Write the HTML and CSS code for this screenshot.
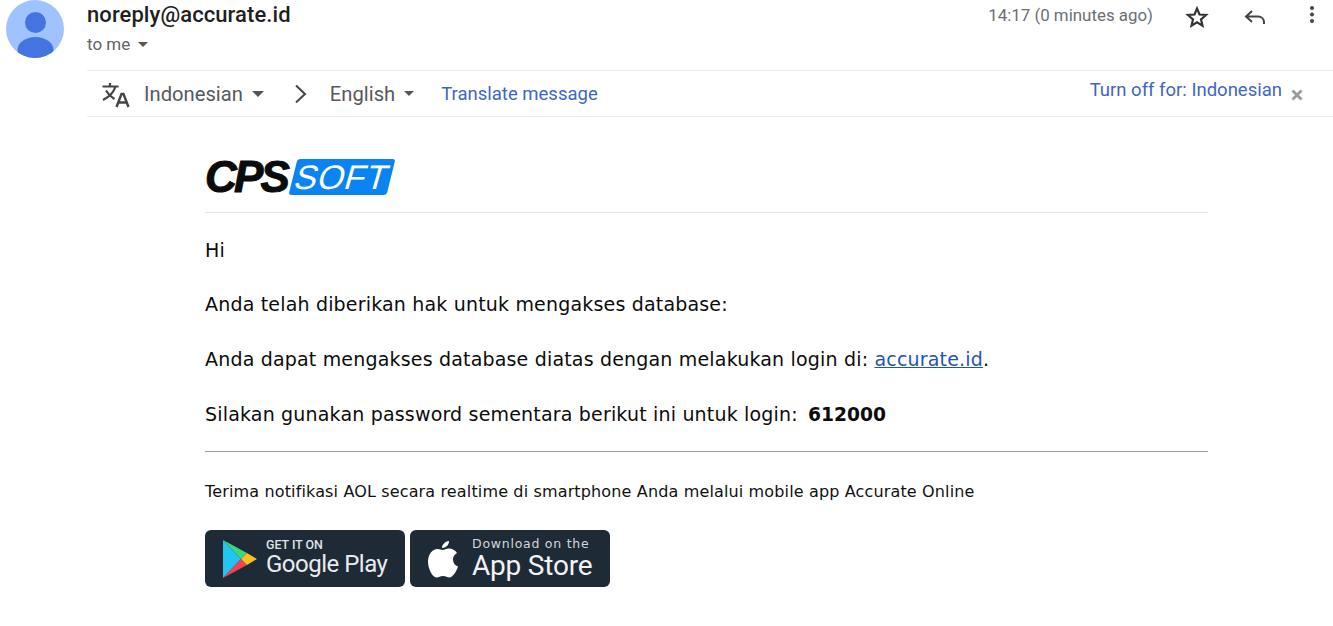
FILE: index.html
```html
<!DOCTYPE html>
<html lang="en">
<head>
<meta charset="utf-8">
<title>noreply@accurate.id</title>
<link rel="stylesheet" href="styles.css">
</head>
<body>
<div class="page">
  <div class="avatar">
    <svg width="58" height="58" viewBox="0 0 58 58"><defs><clipPath id="disc"><circle cx="29" cy="29" r="29"/></clipPath></defs><circle cx="29" cy="29" r="29" fill="#a0c3ff"/><circle cx="29.500" cy="22.500" r="10.500" fill="#4374e0"/><ellipse cx="29.500" cy="50" rx="18" ry="13" fill="#4374e0" clip-path="url(#disc)"/></svg>
  </div>
  <div class="main">
    <header class="head">
      <div class="who">
        <div class="sender">noreply@accurate.id</div>
        <div class="tome">to me <span class="caret small"></span></div>
      </div>
      <div class="meta">
        <span class="time">14:17 (0 minutes ago)</span>
        <svg class="star" width="24" height="24" viewBox="0 0 24 24"><path d="M12 3.500l2.500 6 6.500.5-5 4.300 1.500 6.300-5.500-3.300-5.500 3.300 1.500-6.300-5-4.300 6.500-.5z" fill="none" stroke="#333" stroke-width="2.200" stroke-linejoin="miter"/></svg>
        <svg class="reply" width="24" height="24" viewBox="0 0 24 24"><path d="M9 6l-6 5.500L9 17M3.500 11.500H15c3.500 0 6 2.500 6 6v1.500" fill="none" stroke="#444" stroke-width="2"/></svg>
        <svg class="more" width="6" height="20" viewBox="0 0 6 20"><circle cx="3" cy="3" r="2" fill="#444"/><circle cx="3" cy="9.500" r="2" fill="#444"/><circle cx="3" cy="16" r="2" fill="#444"/></svg>
      </div>
    </header>
    <div class="bar">
      <svg class="tr" width="28" height="26" viewBox="0 0 28 26"><path d="M0.500 4.500h16M8 1v3.500M13.500 4.500c-1.500 5-5.500 10-12.500 13.500M4 8.500c2 3.500 5 6.500 8.500 8.500" fill="none" stroke="#444" stroke-width="2.200"/><path d="M14.500 25l5-13h2l5 13M16.500 20.500h8" fill="none" stroke="#444" stroke-width="2.400"/></svg>
      <span class="lang first">Indonesian</span><span class="caret"></span>
      <svg class="chev" width="14" height="20" viewBox="0 0 14 20"><path d="M2 1.500L11 10 2 18.500" fill="none" stroke="#444" stroke-width="2"/></svg>
      <span class="lang">English</span><span class="caret small"></span>
      <a class="link translate" href="#">Translate message</a>
      <a class="link off" href="#">Turn off for: Indonesian</a>
      <svg class="x" width="12" height="12" viewBox="0 0 12 12"><path d="M1.500 1.500l9 9M10.500 1.500l-9 9" stroke="#9a9a9a" stroke-width="2.800"/></svg>
    </div>
    <article class="mail">
      <div class="logo"><span class="cps">CPS</span><span class="soft"><span class="soft-text">SOFT</span></span></div>
      <p class="line hi">Hi</p>
      <p class="line">Anda telah diberikan hak untuk mengakses database:</p>
      <p class="line">Anda dapat mengakses database diatas dengan melakukan login di: <a href="#" class="mlink">accurate.id</a>.</p>
      <p class="line">Silakan gunakan password sementara berikut ini untuk login: <b>612000</b></p>
      <hr class="rule">
      <p class="note">Terima notifikasi AOL secara realtime di smartphone Anda melalui mobile app Accurate Online</p>
      <div class="stores">
        <div class="store">
          <svg class="gp" width="36" height="40" viewBox="0 0 36 40"><path d="M1 1l18 19L1 39z" fill="#21c4f3"/><path d="M1 1l24 13-6 6z" fill="#3bd67f"/><path d="M1 39l24-13-6-6z" fill="#ef4452"/><path d="M25 14l10 6-10 6-6-6z" fill="#fbbf24"/></svg>
          <div class="gtext"><span class="small-l">GET IT ON</span><span class="big-l">Google Play</span></div>
        </div>
        <div class="store">
          <svg class="apple" width="32" height="38" viewBox="0 0 32 38"><path d="M22 1c.3 3-2.500 7-7 7 0-3.500 3-6.500 7-7zM15.500 10c2 0 3.500-1.500 6.500-1.500 3 0 6 1.500 8 4.500-3 2-4 4-4 6.500 0 3.500 2 6 5 7-1.500 5-5.500 11-8.500 11-2.500 0-3.500-1.500-6.500-1.500S12 37.500 9.500 37.500C5.500 37.500 1 29 1 21.500 1 14 5.500 9 10.500 9c2 0 3.500 1 5 1z" fill="#fff"/></svg>
          <div class="atext"><span class="small-a">Download on the</span><span class="big-a">App Store</span></div>
        </div>
      </div>
    </article>
  </div>
</div>
</body>
</html>
```
FILE: styles.css
```css
* { box-sizing: border-box; }
html, body { margin: 0; padding: 0; background: #fff; overflow: hidden; }
body { height: 626px; font-family: Roboto, "Liberation Sans", sans-serif; }
.page { display: flex; gap: 23px; padding-left: 6px; }
.avatar { flex: none; width: 58px; height: 58px; }
.avatar svg { display: block; }
.main { flex: 1; min-width: 0; }
.head { display: flex; justify-content: space-between; height: 70px; }
.sender { font-size: 22px; font-weight: 500; color: #1f1f1f; line-height: 24px; margin-top: 3px; letter-spacing: .08px; }
.tome { font-size: 17px; color: #5f6368; line-height: 20px; margin-top: 7px; display: flex; align-items: center; gap: 8px; }
.caret { display: inline-block; width: 0; height: 0; border-left: 6px solid transparent; border-right: 6px solid transparent; border-top: 6px solid #555; }
.caret.small { border-left-width: 5.500px; border-right-width: 5.500px; border-top-width: 5.500px; }
.meta { display: flex; align-items: flex-start; padding-top: 4px; padding-right: 18px; }
.time { font-size: 16.900px; color: #6b6f73; line-height: 22px; margin-right: 32px; }
.star { margin-top: 1px; margin-right: 34px; }
.reply { margin-top: 1px; margin-right: 42px; }
.more { margin-top: 1px; }
.bar { display: flex; align-items: center; height: 47px; border-top: 1px solid #ececec; border-bottom: 1px solid #ececec; padding-left: 15px; padding-right: 30px; }
.tr { flex: none; margin-top: 2px; }
.lang { font-size: 20.200px; color: #555a5e; line-height: 24px; margin-right: 9px; }
.lang.first { margin-left: 14px; }
.chev { margin: 0 22px 0 30px; }
.link { color: #3f66c4; text-decoration: none; font-size: 18.500px; line-height: 24px; }
.translate { margin-left: 27px; }
.off { margin-left: auto; margin-top: -7px; }
.x { margin-left: 9px; margin-top: 3px; }
.mail { margin-left: 118px; width: 1003px; padding-top: 42px; }
.logo { display: flex; align-items: center; height: 54px; border-bottom: 1px solid #e6e6e6; padding-bottom: 18px; }
.cps { font-family: "Liberation Sans", sans-serif; font-weight: 700; font-style: italic; font-size: 44px; letter-spacing: -2.800px; line-height: 36px; color: #0b0b0b; -webkit-text-stroke: 1px #0b0b0b; }
.soft { display: block; width: 98px; height: 36px; margin-left: 6px; background: #0b84f3; transform: skewX(-14deg); border-radius: 3px; text-align: center; }
.soft-text { display: block; transform: skewX(-2deg); font-family: "Liberation Sans", sans-serif; font-size: 34px; line-height: 36px; color: #fff; letter-spacing: .5px; }
.line { margin: 0 0 33px; font-family: "DejaVu Sans", sans-serif; font-size: 19px; line-height: 22px; color: #0c0c0c; letter-spacing: .18px; }
.line b { letter-spacing: 0; margin-left: 4px; font-size: 18.700px; }
.hi { margin-top: 26px; margin-bottom: 32px; }
.mlink { color: #1f55b8; text-decoration: underline; }
.rule { border: 0; border-top: 1px solid #9d9d9d; margin: -8px 0 0; }
.note { margin: 30px 0 0; font-family: "DejaVu Sans", sans-serif; font-size: 16px; line-height: 20px; color: #111; letter-spacing: .145px; }
.stores { display: flex; gap: 5px; margin-top: 28px; }
.store { display: flex; align-items: center; width: 200px; height: 57px; background: #1e2a36; border-radius: 6px; color: #fff; }
.gp { margin-left: 17px; flex: none; }
.gtext, .atext { display: flex; flex-direction: column; }
.gtext { margin-left: 8px; }
.small-l { font-size: 12.400px; line-height: 12px; font-weight: 500; color: #dfe3e6; }
.big-l { font-size: 24px; line-height: 27px; letter-spacing: -.5px; color: #e9ecee; }
.apple { margin-left: 17px; flex: none; }
.atext { margin-left: 13px; }
.small-a { font-family: "DejaVu Sans", sans-serif; font-size: 12.500px; line-height: 14px; color: #d3d7da; letter-spacing: .75px; }
.big-a { font-size: 28px; line-height: 30px; color: #f2f3f4; letter-spacing: -.2px; }
```
